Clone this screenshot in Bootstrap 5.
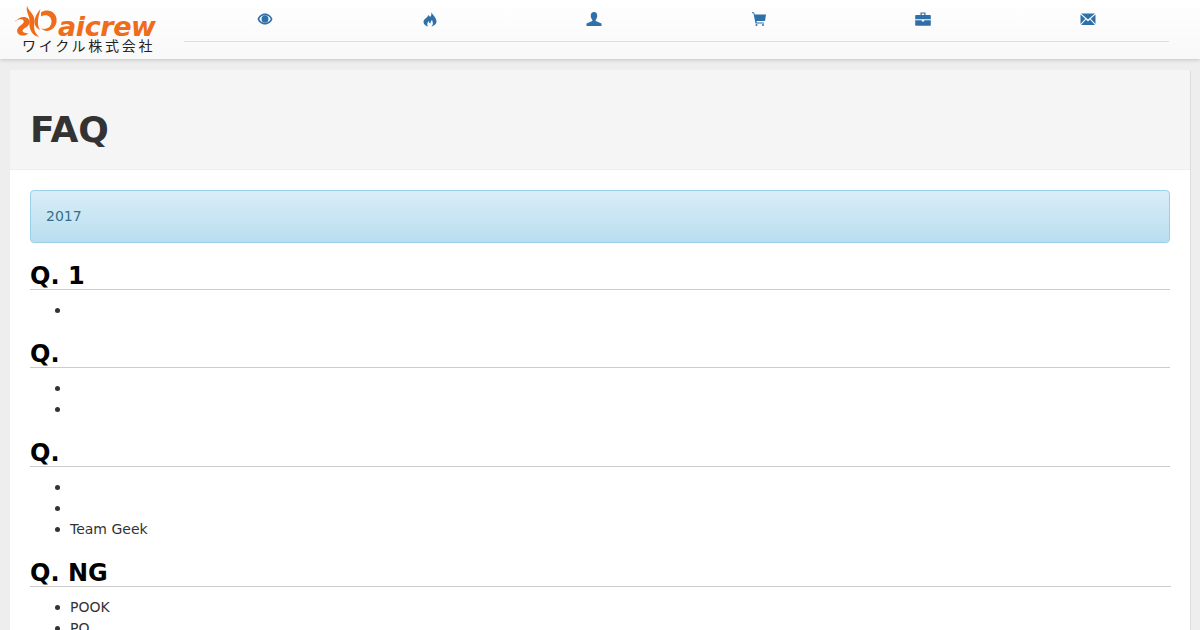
<!DOCTYPE html>
<html lang="ja">
<head>
<meta charset="utf-8">
<title>FAQ</title>
<link rel="stylesheet" href="https://cdn.jsdelivr.net/npm/bootstrap@5.3.0/dist/css/bootstrap.min.css">
<style>
html,body{height:630px;overflow:hidden}
body{background:#eee;color:#333;font:14px/21px "DejaVu Sans",sans-serif}
.top-bar{height:59px;background:linear-gradient(#fff,#f8f8f8);box-shadow:0 1px 4px rgba(0,0,0,.18);position:relative}
.brand-box{width:184px;padding:6px 0 0 15px;flex:none}
.brand-row{height:31px}
.brand-row svg{width:43px;height:31px;flex:none;fill:#ef6c1a}
.brand-name{font:italic bold 27px/20px "DejaVu Sans",sans-serif;color:#ef6c1a;margin:11px 0 0 0;letter-spacing:-.4px;height:20px;white-space:nowrap}
.brand-sub{font:14px/15px "Noto Sans CJK JP",sans-serif;color:#222;letter-spacing:2.75px;margin:1px 0 0 7px;white-space:nowrap}
.menu-row{width:985px;height:42px;border-bottom:1px solid #ddd;padding:11px 73px 0;justify-content:space-between}
.menu-row svg{width:16px;height:16px;display:block;fill:#2f70a8}
.sheet{margin:11px 10px 0;background:#fff;box-shadow:1px 0 0 #ddd;height:570px}
.sheet-head{background:#f5f5f5;padding:40px 20px 19px;border-bottom:1px solid #eee}
.sheet-head h1{font:bold 36px/39.6px "DejaVu Sans",sans-serif;margin:0}
.sheet-body{padding:20px}
.info-box{height:53px;padding:15px;color:#31708f;background:linear-gradient(#d9edf7,#b9def0);border:1px solid #9acfea;border-radius:4px;margin-bottom:20px}
.q-title{font:bold 24px/26px "DejaVu Sans",sans-serif;color:#000;margin:20px 0 10px;border-bottom:1px solid #ccc;height:27px}
.q-list{margin:0 0 10px;padding-left:40px;list-style:none}
.q-list li{position:relative;height:21px}
.q-list li::before{content:"";position:absolute;left:-15.500px;top:8.500px;width:5px;height:5px;border-radius:50%;background:#333}
.wide-rule{margin-right:-1px}
</style>
</head>
<body>
<div class="top-bar d-flex">
  <div class="brand-box">
    <div class="brand-row d-flex">
      <svg viewBox="0 0 43 31"><path d="M1 15.500C3 11 10 9.500 13.500 13c3 3.500 0 7-3.500 9-2.500 1.500-3.500 3-1 4.500 1.500.8 3 .8 4.500.5-2 3-7.500 3.500-10 1-2.500-2.500-1.500-6 2-8.500 2-1.500 4-3 3-5-1-1.800-5-1.500-8.500.5z"/><path d="M12 0c2 6 8 8 7.500 15.500C19 21 18 25 24 31c-6.500-1-10.500-8-9.500-15.500C15 10 10.500 6 12 0z"/><path d="M25.500 3c-1.500 6-3 10-2.500 15 .3 2.500.8 4 2 6-3.500-1.500-5.500-4.500-5.500-8 0-5 2.500-9 6-13z"/><path d="M26 6.500C33 1.500 43 6.500 41.500 16 40 24.500 31 27.500 26.500 22.500c5.500 1.500 10-1.500 10-7 0-5.500-5.500-8-10.500-5z"/></svg>
      <span class="brand-name">aicrew</span>
    </div>
    <div class="brand-sub">ワイクル株式会社</div>
  </div>
  <div class="menu-row d-flex">
    <svg viewBox="0 0 16 16"><path fill-rule="evenodd" d="M8 2.500C4.500 2.500 1.500 5 .5 8c1 3 4 5.500 7.500 5.500s6.500-2.500 7.500-5.500c-1-3-4-5.500-7.500-5.500zm0 1.700c2.600 0 4.900 1.700 5.700 3.800-.8 2.100-3.100 3.800-5.700 3.800S3.100 10.100 2.300 8C3.100 5.900 5.400 4.200 8 4.200zm0 .3a3.500 3.500 0 1 0 0 7 3.500 3.500 0 0 0 0-7z"/></svg>
    <svg viewBox="0 0 16 16"><path d="M9 1C10 3.500 9 5 8 6 7.500 5 7 4.500 6 4 6.300 6.500 1.500 7.500 1.500 11c0 2.500 2.500 4 4.500 4.500C5 14 4.800 12.500 6.500 10c.3 1.500 1 2 2 2.500 0-1.500.5-2.500 1.500-3.500.5 2 1.500 3 .5 5l-1 1.500c2.500-.5 5-2.500 5-5C14.500 7 11 4 9 1z"/></svg>
    <svg viewBox="0 0 16 16"><path d="M8 1C5.800 1 4.800 2.700 4.800 4.800c0 1.700.7 3.200 1.500 4V10L.5 12.500V15h15v-2.500L9.700 10V8.800c.8-.8 1.500-2.300 1.500-4C11.200 2.700 10.200 1 8 1z"/></svg>
    <svg viewBox="0 0 16 16"><path d="M1 1l2 .5L3.800 3.500H15l-1 6.500H5.500l.3 1.500H13v1H4.500l-2-10L1 2z"/><circle cx="5.500" cy="14" r="1"/><circle cx="12" cy="14" r="1"/></svg>
    <svg viewBox="0 0 16 16"><path fill-rule="evenodd" d="M5.500 1.500h5V4H15a.8.800 0 0 1 .8.800V8.300H.2V4.800A.8.800 0 0 1 1 4h4.500zm1.200 1V4h2.600V2.500zM.2 9.300H6.800v1.200h2.400V9.300h6.600V14a.8.800 0 0 1-.8.800H1a.8.800 0 0 1-.8-.8z"/></svg>
    <svg viewBox="0 0 16 16"><path d="M1 2.500h14L8 8.500zM.5 3.500l4.800 4.300L.5 13zM15.500 3.500V13l-4.800-5.200zM6 8.600l2 1.800 2-1.800 5 5.400H1z"/></svg>
  </div>
</div>
<div class="sheet">
  <div class="sheet-head"><h1>FAQ</h1></div>
  <div class="sheet-body">
    <div class="info-box">2017</div>
    <h2 class="q-title">Q. 1</h2>
    <ul class="q-list"><li>&nbsp;</li></ul>
    <h2 class="q-title">Q.</h2>
    <ul class="q-list"><li>&nbsp;</li><li>&nbsp;</li></ul>
    <h2 class="q-title">Q.</h2>
    <ul class="q-list"><li>&nbsp;</li><li>&nbsp;</li><li>Team Geek</li></ul>
    <h2 class="q-title wide-rule">Q. NG</h2>
    <ul class="q-list"><li>POOK</li><li>PO</li></ul>
  </div>
</div>
</body>
</html>
